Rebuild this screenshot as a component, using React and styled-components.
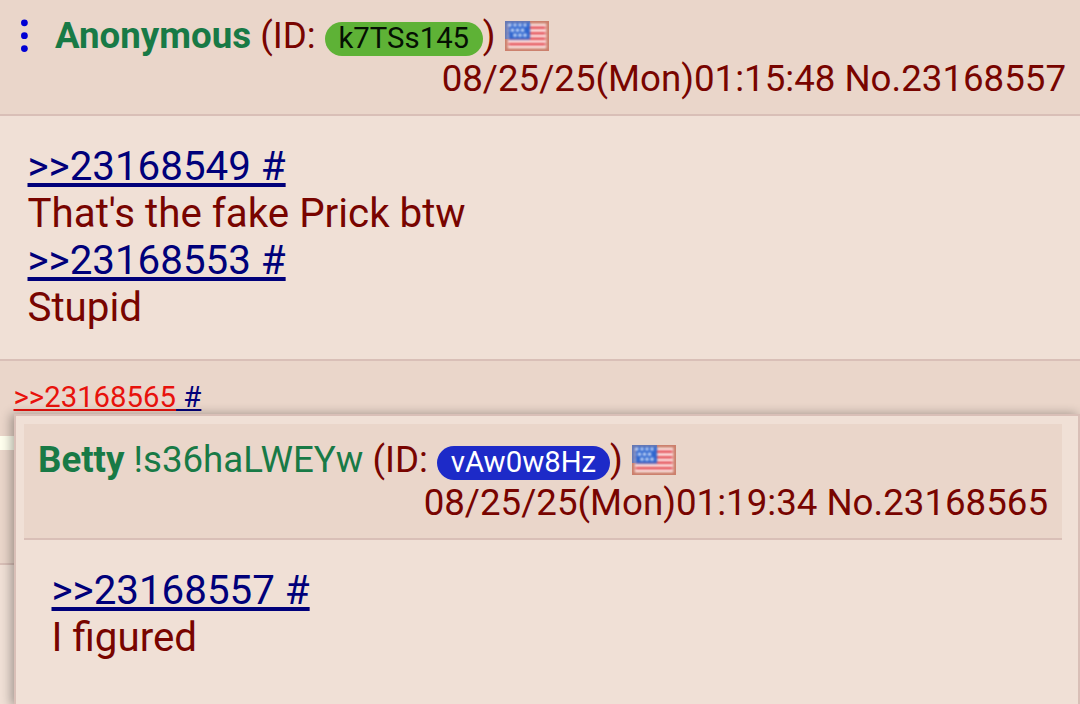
import React from 'react';
import styled, { createGlobalStyle } from 'styled-components';

const GlobalStyle = createGlobalStyle`
  * {
    box-sizing: border-box;
  }

  body {
    margin: 0;
    background: #ffffee;
    color: #780400;
    font-family: Roboto, sans-serif;
    overflow: hidden;
  }
`;

const Board = styled.main`
  position: relative;
  width: 1080px;
  height: 704px;
  overflow: hidden;
`;

const Reply = styled.article`
  background: #f0e0d6;
  margin-bottom: 14px;
`;

const Info = styled.header`
  height: ${props => props.$height || '116px'};
  padding: 14px;
  background: #ead6ca;
  border-bottom: 2px solid #d9bfb7;
  font-size: 36.67px;
  line-height: 43px;
  white-space: nowrap;
`;

const NameLine = styled.div`
  display: flex;
  height: 43px;
`;

const Menu = styled.svg`
  width: 20px;
  height: 43px;
  margin-right: 21px;
`;

const Name = styled.strong`
  color: #187a46;
  font-weight: 700;
`;

const Trip = styled.span`
  color: #187a46;
`;

const Uid = styled.span`
  white-space: pre;
`;

const IdBadge = styled.span`
  display: inline-block;
  height: 34px;
  padding: 0 13.75px;
  border-radius: 17px;
  background: ${props => props.$bg};
  color: ${props => props.$color};
  font-size: 29.33px;
  line-height: 32px;
  vertical-align: baseline;
`;

const Flag = styled.svg`
  width: 44px;
  height: 30px;
  margin: 7px 0 0 9px;
`;

const DateLine = styled.div`
  text-align: right;
`;

const Message = styled.blockquote`
  margin: 0;
  padding: 27px 28px 28px 27.5px;
  font-size: 40.3px;
  line-height: 47px;
`;

const QuoteLink = styled.a`
  color: #00007a;
  text-decoration: underline;
  text-decoration-thickness: 4px;
  text-underline-offset: 3px;
  text-decoration-skip-ink: none;
`;

const Backlinks = styled.div`
  height: 77px;
  padding: 19px 14px 0 13.5px;
  background: #ead6ca;
  border-top: 2px solid #d9bfb7;
  font-size: 29.33px;
  line-height: 34px;
`;

const Backlink = styled(QuoteLink)`
  color: ${props => (props.$active ? '#e8120c' : '#00007a')};
  text-decoration-thickness: 2px;
  text-underline-offset: 2px;
  white-space: pre;
`;

// Hover preview, floats over the thread
const Preview = styled.article`
  position: absolute;
  top: 414px;
  left: 14px;
  width: 1066px;
  height: 292px;
  padding: 8px 16px 0 8px;
  background: #f0e0d6;
  border: 2px solid #d9bfb7;
  box-shadow: -3px 0 10px rgba(0, 0, 0, 0.32);
`;

const Soft = styled.g`
  filter: blur(0.9px);
`;

const stars = [
  [5, 4], [10, 4], [15, 4], [20, 4],
  [7.5, 9.2], [12.5, 9.2], [17.5, 9.2],
  [10, 14.2], [15, 14.2], [20, 14.2],
];

function UsFlag() {
  return (
    <Flag viewBox="0 0 44 30">
      <rect width="44" height="30" fill="#cc7f6c" />
      <rect width="25" height="18" fill="#6678b4" />
      <Soft>
        <rect x="2.8" y="2.8" width="38.4" height="24.4" fill="#fff3f1" />
        {[5.4, 10.9, 16.4, 21.8].map(y => (
          <rect key={y} x="3.5" y={y} width="37" height="2.7" fill="#e2444c" />
        ))}
        <rect x="3.6" y="2" width="21.4" height="16.5" fill="#2f66cf" />
        {stars.map(([x, y]) => (
          <circle key={`${x}-${y}`} cx={x} cy={y} r="1.6" fill="#e6f0ff" />
        ))}
      </Soft>
    </Flag>
  );
}

function PostInfo({ post, menu }) {
  return (
    <Info>
      <NameLine>
        {menu && (
          <Menu viewBox="0 0 20 43">
            {[8.8, 21.7, 34.6].map(cy => (
              <circle key={cy} cx="10.4" cy={cy} r="3.4" fill="#0000d4" />
            ))}
          </Menu>
        )}
        <Name>{post.name}</Name>
        <Uid>
          {post.trip && <Trip>{` ${post.trip}`}</Trip>}
          {' (ID: '}
          <IdBadge $bg={post.idBg} $color={post.idColor}>
            {post.id}
          </IdBadge>
          )
        </Uid>
        <UsFlag />
      </NameLine>
      <DateLine>
        {post.date} No.{post.no}
      </DateLine>
    </Info>
  );
}

const parent = {
  name: 'Anonymous',
  id: 'k7TSs145',
  idBg: '#5eb236',
  idColor: '#051003',
  date: '08/25/25(Mon)01:15:48',
  no: 23168557,
};

const reply = {
  name: 'Betty',
  trip: '!s36haLWEYw',
  id: 'vAw0w8Hz',
  idBg: '#1d2ac8',
  idColor: '#fff',
  date: '08/25/25(Mon)01:19:34',
  no: 23168565,
};

export default function App() {
  return (
    <Board>
      <GlobalStyle />
      <Reply>
        <PostInfo post={parent} menu />
        <Message>
          <QuoteLink>&gt;&gt;23168549 #</QuoteLink>
          <br />
          That's the fake Prick btw
          <br />
          <QuoteLink>&gt;&gt;23168553 #</QuoteLink>
          <br />
          Stupid
        </Message>
        <Backlinks>
          <Backlink $active>&gt;&gt;23168565</Backlink>
          <Backlink> #</Backlink>
        </Backlinks>
      </Reply>
      <Reply>
        <Info $height="115px" />
        <Message />
        <Message />
        <Message />
      </Reply>
      <Preview>
        <PostInfo post={reply} />
        <Message>
          <QuoteLink>&gt;&gt;23168557 #</QuoteLink>
          <br />
          I figured
        </Message>
      </Preview>
    </Board>
  );
}
